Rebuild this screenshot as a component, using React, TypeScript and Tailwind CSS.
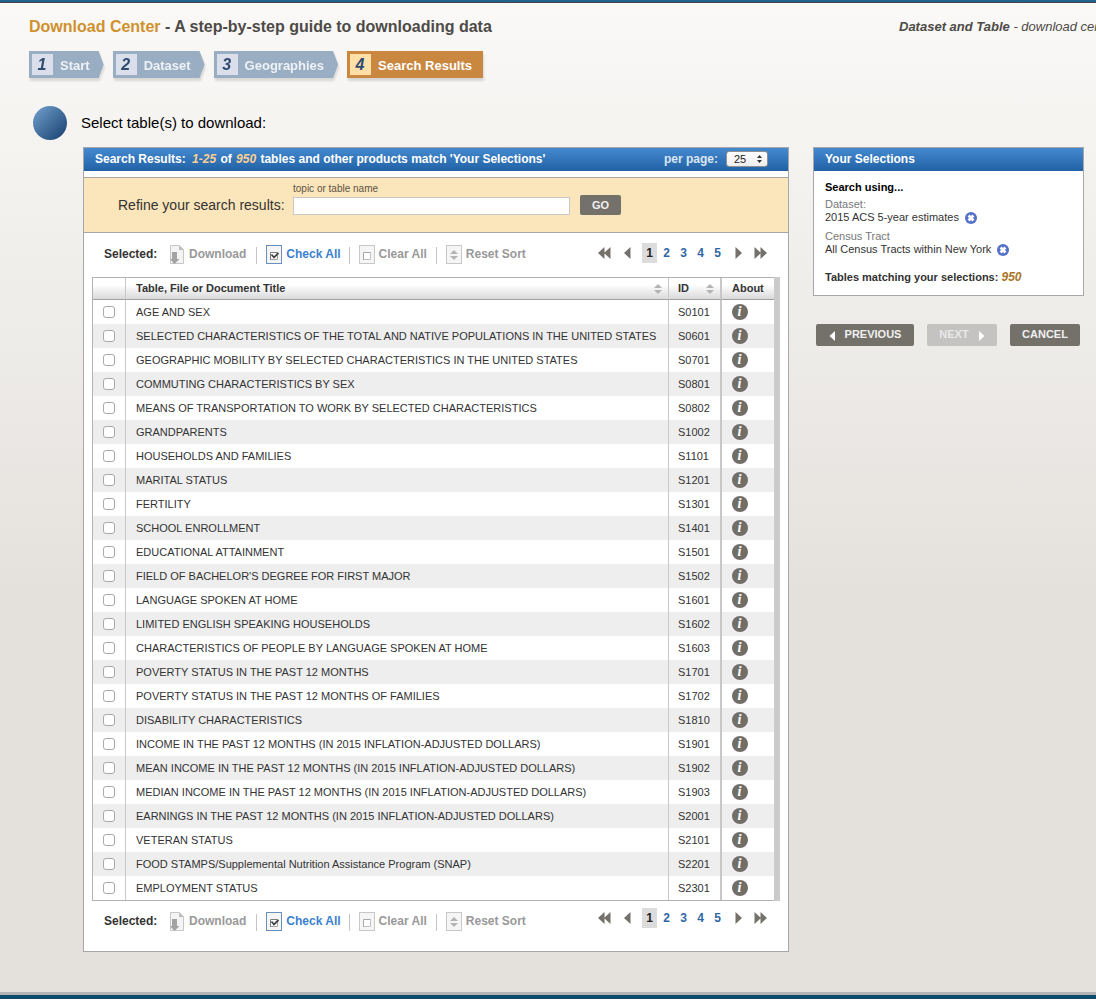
import React from "react";

const rows: [string, string][] = [
  ["AGE AND SEX", "S0101"],
  ["SELECTED CHARACTERISTICS OF THE TOTAL AND NATIVE POPULATIONS IN THE UNITED STATES", "S0601"],
  ["GEOGRAPHIC MOBILITY BY SELECTED CHARACTERISTICS IN THE UNITED STATES", "S0701"],
  ["COMMUTING CHARACTERISTICS BY SEX", "S0801"],
  ["MEANS OF TRANSPORTATION TO WORK BY SELECTED CHARACTERISTICS", "S0802"],
  ["GRANDPARENTS", "S1002"],
  ["HOUSEHOLDS AND FAMILIES", "S1101"],
  ["MARITAL STATUS", "S1201"],
  ["FERTILITY", "S1301"],
  ["SCHOOL ENROLLMENT", "S1401"],
  ["EDUCATIONAL ATTAINMENT", "S1501"],
  ["FIELD OF BACHELOR'S DEGREE FOR FIRST MAJOR", "S1502"],
  ["LANGUAGE SPOKEN AT HOME", "S1601"],
  ["LIMITED ENGLISH SPEAKING HOUSEHOLDS", "S1602"],
  ["CHARACTERISTICS OF PEOPLE BY LANGUAGE SPOKEN AT HOME", "S1603"],
  ["POVERTY STATUS IN THE PAST 12 MONTHS", "S1701"],
  ["POVERTY STATUS IN THE PAST 12 MONTHS OF FAMILIES", "S1702"],
  ["DISABILITY CHARACTERISTICS", "S1810"],
  ["INCOME IN THE PAST 12 MONTHS (IN 2015 INFLATION-ADJUSTED DOLLARS)", "S1901"],
  ["MEAN INCOME IN THE PAST 12 MONTHS (IN 2015 INFLATION-ADJUSTED DOLLARS)", "S1902"],
  ["MEDIAN INCOME IN THE PAST 12 MONTHS (IN 2015 INFLATION-ADJUSTED DOLLARS)", "S1903"],
  ["EARNINGS IN THE PAST 12 MONTHS (IN 2015 INFLATION-ADJUSTED DOLLARS)", "S2001"],
  ["VETERAN STATUS", "S2101"],
  ["FOOD STAMPS/Supplemental Nutrition Assistance Program (SNAP)", "S2201"],
  ["EMPLOYMENT STATUS", "S2301"],
];

const steps = ["Start", "Dataset", "Geographies"];

function Step({ n, label }: { n: number; label: string }) {
  return (
    <a href="#" className="block drop-shadow-[1px_3px_1px_rgba(0,0,0,0.12)]">
      <span className="flex h-[27px] items-center bg-[#9aaec3] pl-[3px] pr-[14px] [clip-path:polygon(0_0,calc(100%-5px)_0,100%_50%,calc(100%-5px)_100%,0_100%)]">
        <span className="flex h-[21px] w-[21px] items-center justify-center bg-[#dadfeb] pr-px text-base font-bold italic text-[#2f4b70]">{n}</span>
        <span className="pl-[7px] pt-[3px] text-[13px] font-bold text-[#eef1f6]">{label}</span>
      </span>
    </a>
  );
}

function Triangle({ dir, color = "#74716a" }: { dir: "l" | "r"; color?: string }) {
  return (
    <svg width="7" height="12" viewBox="0 0 7 12" aria-hidden="true">
      <path d={dir === "l" ? "M6.500 0V12L0 6Z" : "M0.500 0V12L7 6Z"} fill={color} />
    </svg>
  );
}

function ButtonArrow({ dir }: { dir: "l" | "r" }) {
  return (
    <svg width="6" height="10" viewBox="0 0 6 10" className="mt-[2px]" aria-hidden="true">
      <path d={dir === "l" ? "M6 0V10L0.500 5Z" : "M0 0V10L5.500 5Z"} fill="#ffffff" />
    </svg>
  );
}

function DoubleTriangle({ dir }: { dir: "l" | "r" }) {
  return (
    <svg width="13" height="12" viewBox="0 0 13 12" aria-hidden="true">
      <path d={dir === "l" ? "M6.500 0V12L0 6ZM12.500 0V12L6 6Z" : "M0.500 0V12L7 6ZM6.500 0V12L13 6Z"} fill="#74716a" />
    </svg>
  );
}

function SortArrows() {
  return (
    <svg width="8" height="10" viewBox="0 0 8 10" aria-hidden="true">
      <path d="M4 0L8 4H0ZM4 10L0 6H8Z" fill="#b4b4b4" />
    </svg>
  );
}

function DownloadIcon() {
  return (
    <svg width="15" height="19" viewBox="0 0 15 19" aria-hidden="true">
      <path d="M0.500 0.500H9L13.500 5V18.500H0.500Z" fill="#f4f4f4" stroke="#c6c6c6" />
      <path d="M9 0L14 5H9Z" fill="#bdbdbd" />
      <path d="M2 7H7V14H9.500L4.500 19L0 14H2Z" fill="#a3a3a3" />
    </svg>
  );
}

function BoxIcon({ kind }: { kind: "check" | "clear" | "sort" }) {
  const on = kind === "check";
  return (
    <svg width="16" height="19" viewBox="0 0 16 19" aria-hidden="true">
      <rect x="0.500" y="0.500" width="15" height="18" fill="#f5f5f5" stroke={on ? "#6790bd" : "#c8c8c8"} />
      {kind === "sort" ? (
        <path d="M8 5L12 9H4ZM8 15L4 11H12Z" fill="#b4b4b4" />
      ) : (
        <>
          <rect x="4" y="7" width="8" height="8" fill="#ffffff" />
          <path d="M4.500 15V7.500H12" fill="none" stroke={on ? "#7d7d7d" : "#a8a8a8"} />
          <path d="M5 14.500H11.500V7" fill="none" stroke={on ? "#a4a4a4" : "#c0c0c0"} />
        </>
      )}
      {on && <path d="M5.500 9.500L8 12.500L12.500 8" fill="none" stroke="#444444" strokeWidth="1.800" />}
    </svg>
  );
}

function Divider() {
  return <span className="mt-[2px] h-[17px] w-px bg-[#c4c4c4]" />;
}

function Toolbar({ bottom = false }: { bottom?: boolean }) {
  const page = "flex h-5 w-[17px] items-center justify-center text-xs font-bold";
  return (
    <div className={bottom ? "flex items-start justify-between pb-2 pl-5 pr-[21px] pt-[7px]" : "flex h-11 items-start justify-between pl-5 pr-[21px] pt-[10px]"}>
      <div className={bottom ? "flex pt-1 text-xs font-bold leading-[18px] text-[#999]" : "flex pt-[2px] text-xs font-bold leading-[18px] text-[#999]"}>
        <span className="w-[66px] text-[#333]">Selected:</span>
        <button type="button" className="flex gap-1 pr-[10px]"><DownloadIcon />Download</button>
        <Divider />
        <button type="button" className="flex gap-1 pl-[9px] pr-2 text-[#3c81cf]"><BoxIcon kind="check" />Check All</button>
        <Divider />
        <button type="button" className="flex gap-1 px-[9px]"><BoxIcon kind="clear" />Clear All</button>
        <Divider />
        <button type="button" className="flex gap-1 pl-[9px]"><BoxIcon kind="sort" />Reset Sort</button>
      </div>
      <nav aria-label="Pages" className="flex items-center text-[#2f67a5]">
        <button type="button" aria-label="First page" className="mr-[13px]"><DoubleTriangle dir="l" /></button>
        <button type="button" aria-label="Previous page" className="mr-[11px]"><Triangle dir="l" /></button>
        <span className="mr-px flex h-5 w-[15px] items-center justify-center bg-[#dcdcdc] text-xs font-bold text-[#222]">1</span>
        <a href="#" className={page}>2</a>
        <a href="#" className={page}>3</a>
        <a href="#" className={page}>4</a>
        <a href="#" className={page}>5</a>
        <button type="button" aria-label="Next page" className="ml-[9px] mr-3"><Triangle dir="r" /></button>
        <button type="button" aria-label="Last page"><DoubleTriangle dir="r" /></button>
      </nav>
    </div>
  );
}

function RemoveButton({ label }: { label: string }) {
  return (
    <button type="button" aria-label={label}>
      <svg width="12" height="12" viewBox="0 0 12 12" aria-hidden="true">
        <circle cx="6" cy="6" r="6" fill="#5570c8" />
        <path d="M3.600 3.600L8.400 8.400M8.400 3.600L3.600 8.400" stroke="#fff" strokeWidth="2.800" />
      </svg>
    </button>
  );
}

export default function App() {
  const navButton = "flex h-[22px] items-center justify-center rounded-[2px] text-[11px] font-bold";
  return (
    <div className="flex min-h-screen flex-col overflow-hidden bg-[#e4e1dd] bg-[linear-gradient(to_bottom,#faf9f7_0px,#e4e1dd_600px)] font-['Liberation_Sans',Arial,sans-serif] text-[#333]">
      <div className="h-[3px] border-b border-[#444] bg-[#20618f]" />
      <header className="flex justify-between pl-[29px] pt-[14px]">
        <h1 className="whitespace-nowrap text-base font-bold leading-5 text-[#4d4a47]">
          <span className="text-[#cf912d]">Download Center</span> - A step-by-step guide to downloading data
        </h1>
        <p className="w-[197px] overflow-hidden whitespace-nowrap text-[13px] italic leading-5 text-[#4d4a47]">
          <b>Dataset and Table</b> - download cen
        </p>
      </header>
      <nav aria-label="Steps" className="flex gap-[9px] pl-[29px] pt-[14px]">
        {steps.map((s, i) => <Step key={s} n={i + 1} label={s} />)}
        <a href="#" aria-current="step" className="flex h-[27px] items-center bg-[#c98740] pl-[3px] pr-[11px] shadow-[1px_3px_2px_rgba(0,0,0,0.13)]">
          <span className="flex h-[21px] w-[21px] items-center justify-center bg-[#ffdfa8] pr-px text-base font-bold italic text-[#2f4b70]">4</span>
          <span className="pl-[7px] pt-[3px] text-[13px] font-bold text-white">Search Results</span>
        </a>
      </nav>
      <div className="flex items-center gap-[14px] pb-[7px] pl-[33px] pt-7">
        <span className="size-[34px] rounded-full bg-linear-to-br from-[#74a3cf] to-[#153f6e]" />
        <h2 className="text-[15px] text-black">Select table(s) to download:</h2>
      </div>

      <div className="flex flex-1 items-start gap-6 pb-10 pl-[83px] pr-3">
        <main className="min-w-0 flex-1 border border-[#a7a7a7] bg-white pb-3">
          <div className="flex h-[23px] items-center justify-between bg-linear-to-b from-[#4489cf] to-[#2162a5] pb-px pl-[11px] pr-5 text-xs font-bold text-white">
            <h3 className="whitespace-nowrap">
              Search Results: <em className="pl-[3px] pr-px text-[#fbd093]">1-25</em> of <em className="px-px text-[#fbd093]">950</em> tables and other products match 'Your Selections'
            </h3>
            <label className="flex items-center gap-2 text-[#dbe6f3]">
              per page:
              <span className="relative flex">
                <select className="h-4 w-[42px] appearance-none rounded-[3px] border border-[#8f8f8f] bg-linear-to-b from-white to-[#eeeeee] pl-[7px] text-[11px] font-normal leading-[14px] text-[#222]" defaultValue="25">
                  <option>25</option>
                  <option>50</option>
                  <option>100</option>
                </select>
                <svg className="pointer-events-none absolute right-[6px] top-1" width="5" height="8" viewBox="0 0 5 8" aria-hidden="true">
                  <path d="M2.500 0L5 3H0ZM2.500 8L0 5H5Z" fill="#333" />
                </svg>
              </span>
            </label>
          </div>
          <form className="mt-[6px] flex h-14 border-y border-[#a7a7a7] bg-[#fbe5ba] pl-[34px]" onSubmit={(e) => e.preventDefault()}>
            <span className="w-[175px] whitespace-nowrap pt-[17px] text-sm leading-5">Refine your search results:</span>
            <div className="flex flex-col pt-[5px]">
              <label htmlFor="topic" className="text-[10px] leading-3 text-[#5c5346]">topic or table name</label>
              <input id="topic" type="text" className="mt-[2px] h-[18px] w-[277px] border border-[#c8c8c8] bg-white px-1 text-xs" />
            </div>
            <button type="submit" className="ml-[10px] mt-[17px] h-5 w-[41px] rounded-[2px] bg-[#74716a] text-[11px] font-bold text-[#f0f0f0]">GO</button>
          </form>
          <Toolbar />
          <div className="mx-2 border-r-[6px] border-[#cbcbcb]">
            <table className="w-full table-fixed border-separate border-spacing-0 border-y border-l border-[#b3b3b3] text-left text-[11px]">
              <colgroup>
                <col className="w-[33px]" />
                <col />
                <col className="w-[53px]" />
                <col className="w-[52px]" />
              </colgroup>
              <thead>
                <tr className="h-[22px] bg-linear-to-b from-white from-30% to-[#d7d8da]">
                  <th aria-label="Select" className="border-b border-r border-b-[#a0a0a0] border-r-[#c8c8c8] p-0" />
                  <th className="border-b border-r border-b-[#a0a0a0] border-r-[#c8c8c8] p-0 pl-[10px] pr-[6px]">
                    <span className="flex items-center justify-between">Table, File or Document Title <SortArrows /></span>
                  </th>
                  <th className="border-b border-r-2 border-b-[#a0a0a0] border-r-[#c8c8c8] p-0 pl-[9px] pr-[6px]">
                    <span className="flex items-center justify-between">ID <SortArrows /></span>
                  </th>
                  <th className="border-b border-b-[#a0a0a0] p-0 pl-[10px]">About</th>
                </tr>
              </thead>
              <tbody>
                {rows.map(([title, id]) => (
                  <tr key={id} className="h-6 even:bg-[#eeeeee]">
                    <td className="border-r border-[#c8c8c8] p-0 pl-[10px]">
                      <input type="checkbox" aria-label={title} className="block size-3 appearance-none rounded-[3px] border border-[#a9a9a9] bg-white checked:bg-[#3c81cf]" />
                    </td>
                    <td className="whitespace-nowrap border-r border-[#c8c8c8] p-0 pl-[10px]">{title}</td>
                    <td className="border-r-2 border-[#c8c8c8] p-0 pl-[9px]">{id}</td>
                    <td className="p-0 pl-[10px]">
                      <button type="button" aria-label={"About " + id} className="flex size-4 items-center justify-center rounded-full bg-[#716e67] pr-px font-['Liberation_Serif',serif] text-sm font-bold italic leading-none text-white">i</button>
                    </td>
                  </tr>
                ))}
              </tbody>
            </table>
          </div>
          <Toolbar bottom />
        </main>

        <aside className="w-[271px] shrink-0">
          <section className="h-[149px] border border-[#a7a7a7] bg-white text-[11px] leading-[14px]">
            <h3 className="flex h-[23px] items-center bg-linear-to-b from-[#4489cf] to-[#2162a5] pb-px pl-[11px] text-xs font-bold text-white">Your Selections</h3>
            <div className="pl-[11px] pt-[9px]">
              <h4 className="font-bold text-black">Search using...</h4>
              <p className="pt-[3px] text-[#777]">Dataset:</p>
              <p className="flex items-center gap-[6px] leading-[13px]">2015 ACS 5-year estimates <RemoveButton label="Remove dataset" /></p>
              <p className="pt-[5px] text-[#777]">Census Tract</p>
              <p className="flex items-center gap-[6px] leading-[13px]">All Census Tracts within New York <RemoveButton label="Remove geography" /></p>
              <p className="pt-[14px] font-bold">Tables matching your selections: <em className="text-xs leading-[14px] text-[#a97528]">950</em></p>
            </div>
          </section>
          <div className="flex gap-[13px] pl-[3px] pt-7">
            <button type="button" className={navButton + " w-[98px] gap-[10px] bg-[#74716a] pb-px text-[#f0f0f0]"}><ButtonArrow dir="l" />PREVIOUS</button>
            <button type="button" disabled className={navButton + " w-[70px] gap-[10px] bg-[#c4c3c1] pb-px text-[#e8e8e8]"}>NEXT<ButtonArrow dir="r" /></button>
            <button type="button" className={navButton + " w-[70px] bg-[#74716a] pb-px text-[#f0f0f0]"}>CANCEL</button>
          </div>
        </aside>
      </div>
      <footer className="h-[7px] border-t-[3px] border-[#b5b5b5] bg-[#0d4a6c]" />
    </div>
  );
}
